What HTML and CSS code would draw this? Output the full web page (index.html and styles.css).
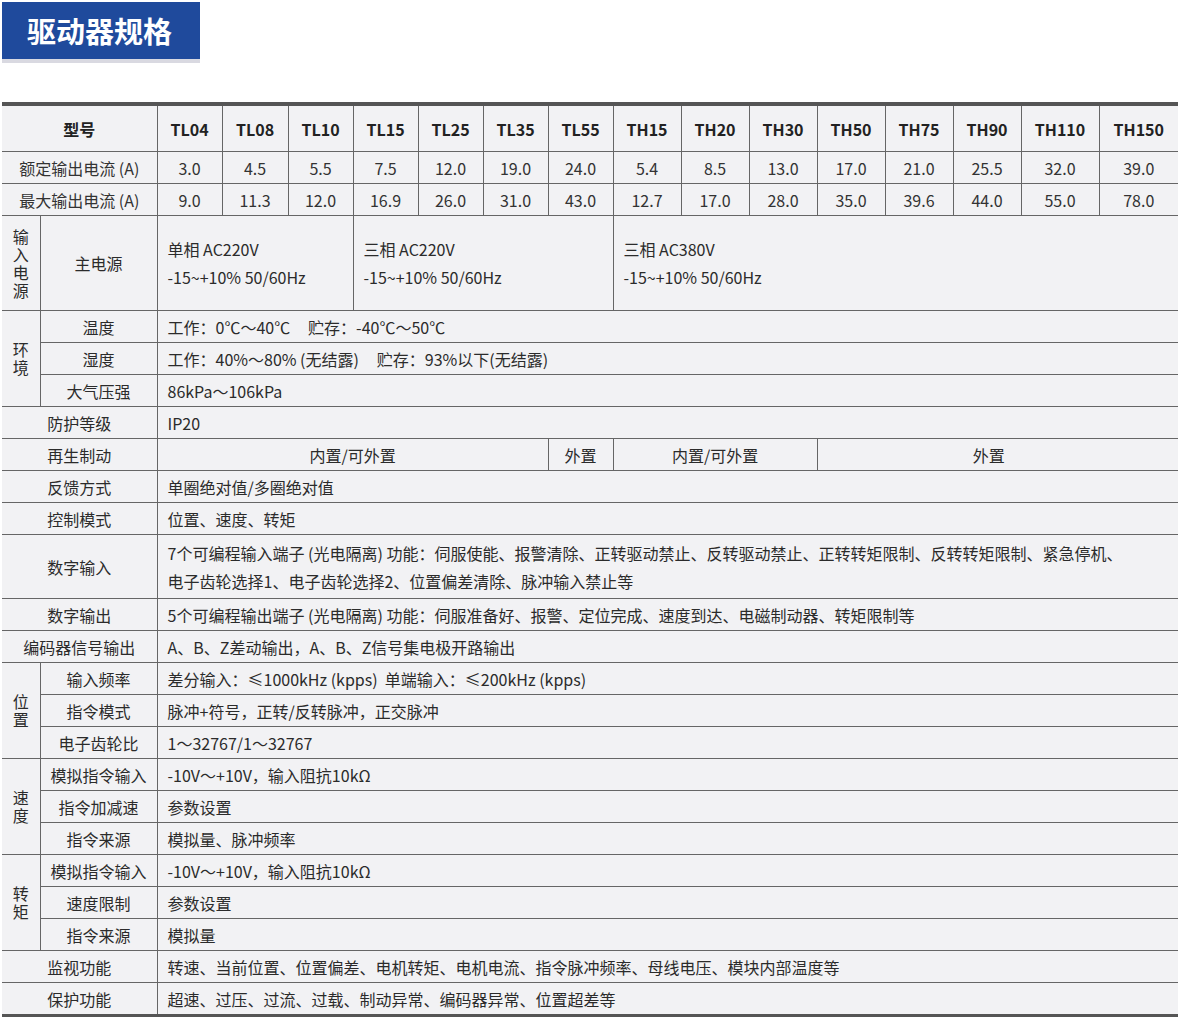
FILE: index.html
```html
<!DOCTYPE html>
<html lang="zh-CN">
<head>
<meta charset="utf-8">
<title>驱动器规格</title>
<link rel="stylesheet" href="styles.css">
</head>
<body>
<div class="title-wrap"><h1 class="title">驱动器规格</h1></div>
<table class="spec">
  <colgroup>
    <col style="width:38px"><col style="width:117px">
    <col style="width:65px"><col style="width:66px"><col style="width:65px"><col style="width:65px"><col style="width:65px"><col style="width:65px"><col style="width:65px">
    <col style="width:68px"><col style="width:68px"><col style="width:68px"><col style="width:68px"><col style="width:68px"><col style="width:68px">
    <col style="width:78px"><col style="width:79px">
  </colgroup>
  <tr class="head">
    <th colspan="2">型号</th>
    <th>TL04</th><th>TL08</th><th>TL10</th><th>TL15</th><th>TL25</th><th>TL35</th><th>TL55</th>
    <th>TH15</th><th>TH20</th><th>TH30</th><th>TH50</th><th>TH75</th><th>TH90</th><th>TH110</th><th>TH150</th>
  </tr>
  <tr class="num">
    <td colspan="2" class="lbl">额定输出电流 (A)</td>
    <td>3.0</td><td>4.5</td><td>5.5</td><td>7.5</td><td>12.0</td><td>19.0</td><td>24.0</td>
    <td>5.4</td><td>8.5</td><td>13.0</td><td>17.0</td><td>21.0</td><td>25.5</td><td>32.0</td><td>39.0</td>
  </tr>
  <tr class="num">
    <td colspan="2" class="lbl">最大输出电流 (A)</td>
    <td>9.0</td><td>11.3</td><td>12.0</td><td>16.9</td><td>26.0</td><td>31.0</td><td>43.0</td>
    <td>12.7</td><td>17.0</td><td>28.0</td><td>35.0</td><td>39.6</td><td>44.0</td><td>55.0</td><td>78.0</td>
  </tr>
  <tr class="power">
    <td class="grp"><span class="vert">输入电源</span></td>
    <td class="lbl">主电源</td>
    <td colspan="3" class="val">单相 AC220V<br>-15~+10% 50/60Hz</td>
    <td colspan="4" class="val">三相 AC220V<br>-15~+10% 50/60Hz</td>
    <td colspan="8" class="val">三相 AC380V<br>-15~+10% 50/60Hz</td>
  </tr>
  <tr>
    <td class="grp" rowspan="3"><span class="vert">环境</span></td>
    <td class="lbl">温度</td>
    <td colspan="15" class="val">工作：0℃～40℃&nbsp;&nbsp;&nbsp;&nbsp;&nbsp;贮存：-40℃～50℃</td>
  </tr>
  <tr>
    <td class="lbl">湿度</td>
    <td colspan="15" class="val">工作：40%～80% (无结露)&nbsp;&nbsp;&nbsp;&nbsp;&nbsp;贮存：93%以下(无结露)</td>
  </tr>
  <tr>
    <td class="lbl">大气压强</td>
    <td colspan="15" class="val">86kPa～106kPa</td>
  </tr>
  <tr>
    <td colspan="2" class="lbl">防护等级</td>
    <td colspan="15" class="val">IP20</td>
  </tr>
  <tr>
    <td colspan="2" class="lbl">再生制动</td>
    <td colspan="6" class="mid">内置/可外置</td>
    <td class="mid">外置</td>
    <td colspan="3" class="mid">内置/可外置</td>
    <td colspan="5" class="mid mid-shift">外置</td>
  </tr>
  <tr>
    <td colspan="2" class="lbl">反馈方式</td>
    <td colspan="15" class="val">单圈绝对值/多圈绝对值</td>
  </tr>
  <tr>
    <td colspan="2" class="lbl">控制模式</td>
    <td colspan="15" class="val">位置、速度、转矩</td>
  </tr>
  <tr class="tall">
    <td colspan="2" class="lbl">数字输入</td>
    <td colspan="15" class="val">7个可编程输入端子 (光电隔离) 功能：伺服使能、报警清除、正转驱动禁止、反转驱动禁止、正转转矩限制、反转转矩限制、紧急停机、<br>电子齿轮选择1、电子齿轮选择2、位置偏差清除、脉冲输入禁止等</td>
  </tr>
  <tr>
    <td colspan="2" class="lbl">数字输出</td>
    <td colspan="15" class="val">5个可编程输出端子 (光电隔离) 功能：伺服准备好、报警、定位完成、速度到达、电磁制动器、转矩限制等</td>
  </tr>
  <tr>
    <td colspan="2" class="lbl">编码器信号输出</td>
    <td colspan="15" class="val">A、B、Z差动输出，A、B、Z信号集电极开路输出</td>
  </tr>
  <tr>
    <td class="grp" rowspan="3"><span class="vert">位置</span></td>
    <td class="lbl">输入频率</td>
    <td colspan="15" class="val">差分输入：≤1000kHz (kpps)&nbsp;&nbsp;单端输入：≤200kHz (kpps)</td>
  </tr>
  <tr>
    <td class="lbl">指令模式</td>
    <td colspan="15" class="val">脉冲+符号，正转/反转脉冲，正交脉冲</td>
  </tr>
  <tr>
    <td class="lbl">电子齿轮比</td>
    <td colspan="15" class="val">1～32767/1～32767</td>
  </tr>
  <tr>
    <td class="grp" rowspan="3"><span class="vert">速度</span></td>
    <td class="lbl">模拟指令输入</td>
    <td colspan="15" class="val">-10V～+10V，输入阻抗10kΩ</td>
  </tr>
  <tr>
    <td class="lbl">指令加减速</td>
    <td colspan="15" class="val">参数设置</td>
  </tr>
  <tr>
    <td class="lbl">指令来源</td>
    <td colspan="15" class="val">模拟量、脉冲频率</td>
  </tr>
  <tr>
    <td class="grp" rowspan="3"><span class="vert">转矩</span></td>
    <td class="lbl">模拟指令输入</td>
    <td colspan="15" class="val">-10V～+10V，输入阻抗10kΩ</td>
  </tr>
  <tr>
    <td class="lbl">速度限制</td>
    <td colspan="15" class="val">参数设置</td>
  </tr>
  <tr>
    <td class="lbl">指令来源</td>
    <td colspan="15" class="val">模拟量</td>
  </tr>
  <tr>
    <td colspan="2" class="lbl">监视功能</td>
    <td colspan="15" class="val">转速、当前位置、位置偏差、电机转矩、电机电流、指令脉冲频率、母线电压、模块内部温度等</td>
  </tr>
  <tr class="last">
    <td colspan="2" class="lbl">保护功能</td>
    <td colspan="15" class="val">超速、过压、过流、过载、制动异常、编码器异常、位置超差等</td>
  </tr>
</table>
</body>
</html>
```
FILE: styles.css
```css
html, body {
  margin: 0;
  padding: 0;
  background: #ffffff;
}
body {
  padding: 2px;
  font-family: "Noto Sans CJK SC", "Noto Sans", sans-serif;
  color: #2b2b2b;
}
.title-wrap {
  width: 198px;
  border-bottom: 4px solid #d9d9e1;
}
.title {
  margin: 0;
  height: 57px;
  box-sizing: border-box;
  padding-left: 25px;
  background: #1f4a9c;
  color: #ffffff;
  font-size: 29px;
  font-weight: 700;
  line-height: 57px;
  letter-spacing: 0;
}
.spec {
  margin-top: 39px;
  width: 1176px;
  table-layout: fixed;
  border-collapse: collapse;
  background: #f2f2f4;
  font-size: 16px;
  border-top: 4px solid #555555;
  border-bottom: 3px solid #555555;
}
.spec th, .spec td {
  border: 1px solid #666666;
  padding: 0;
  text-align: center;
  vertical-align: middle;
  line-height: 20px;
  height: 31px;
  white-space: nowrap;
}
.spec tr > :first-child { border-left: none; }
.spec tr > :last-child { border-right: none; }
.spec .grp { border-left: none; }
.spec tr.head th {
  height: 45px;
  font-weight: 700;
  color: #222222;
}
.spec tr.head th:first-child { border-top: none; }
.spec tr.num td { color: #333333; }
.spec td.val {
  text-align: left;
  padding-left: 10px;
  line-height: 28px;
}
.spec td.mid-shift { padding-right: 18px; }
.spec tr.power td { height: 94px; }
.spec tr.tall td { height: 63px; }
.spec .vert {
  display: inline-block;
  width: 1em;
  white-space: normal;
  line-height: 18px;
  word-break: break-all;
}
.spec tr.last td { border-bottom: none; }
```
